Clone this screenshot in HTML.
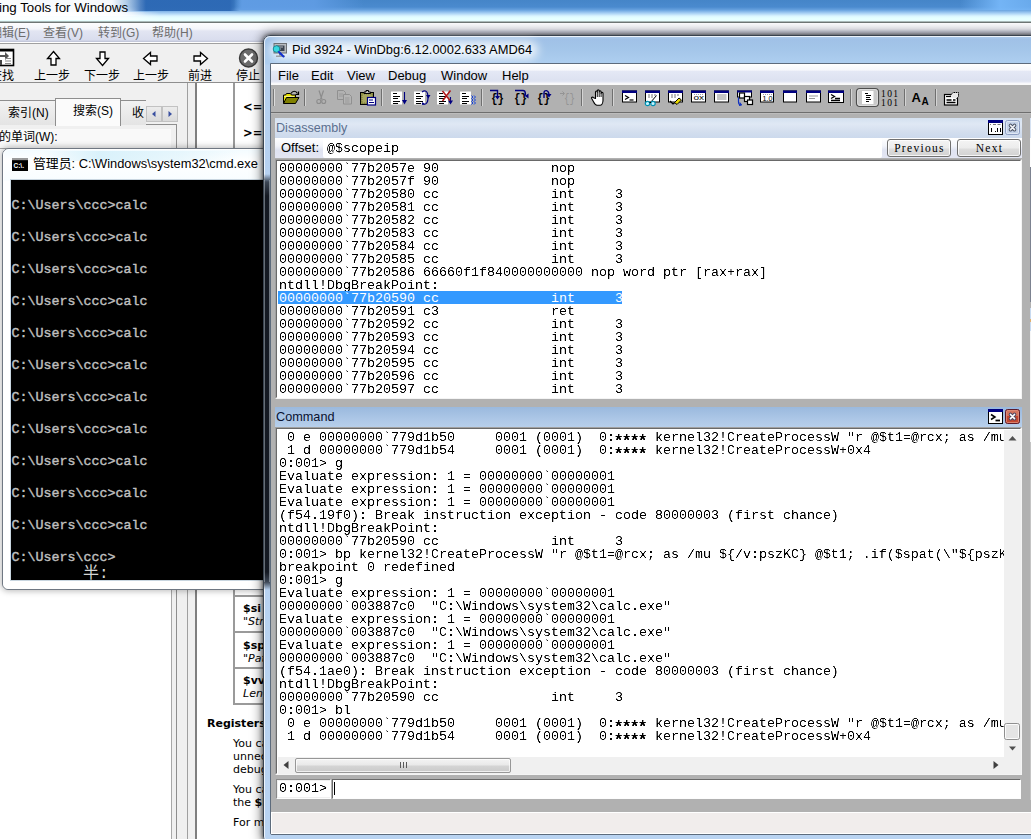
<!DOCTYPE html><html><head><meta charset="utf-8"><title>WinDbg</title><style>
*{box-sizing:border-box;margin:0;padding:0}
html,body{width:1031px;height:839px;overflow:hidden;background:#fff}
body{position:relative;font-family:"Liberation Sans","Noto Sans CJK SC",sans-serif;font-size:12px;color:#000}
.a{position:absolute}
.ui{font-family:"Liberation Sans","Noto Sans CJK SC",sans-serif;font-size:12px;white-space:pre}
.cj{font-family:"Liberation Sans","Noto Sans CJK SC",sans-serif;font-size:12px;white-space:pre}
.mono{font-family:"Liberation Mono","DejaVu Sans Mono",monospace;font-size:13.33px;line-height:13px;white-space:pre;color:#000;letter-spacing:0}
.ln{position:absolute;left:0;height:13px;line-height:15px;white-space:pre}
.cmdt{font-family:"Liberation Mono","DejaVu Sans Mono",monospace;font-weight:normal;-webkit-text-stroke:.400px #c0c0c0;font-size:13.33px;line-height:20px;height:16px;white-space:pre;color:#c0c0c0}
.ast{display:inline-block;width:32px;height:13px;vertical-align:top;font-weight:bold;font-size:17px;letter-spacing:-2.200px;line-height:23px;overflow:hidden;text-indent:-1.500px}
.sep{position:absolute;top:89px;width:2px;height:20px;border-left:1px solid #808080;border-right:1px solid #d8d8d8}
</style></head><body>
<div class="a" style="left:0;top:0;width:1031px;height:23px;background:linear-gradient(180deg,#4585c8 0px,#4a8ace 7px,#68a2df 10px,#a4cdf3 13px,#dbf5ff 16px,#e6ffff 18px,#e9ffff 21px,#6e7674 22px,#6e7674 23px)"></div>
<div class="a" style="left:126px;top:0;width:114px;height:11px;background:linear-gradient(90deg,rgba(44,104,180,0),rgba(44,104,180,.95) 14px,rgba(44,104,180,.95) 104px,rgba(44,104,180,0));"></div>
<div class="a" style="left:234px;top:0;width:130px;height:10px;background:linear-gradient(90deg,rgba(98,158,230,0),rgba(98,158,230,.9) 8px,rgba(98,158,230,.85) 80px,rgba(98,158,230,.0));"></div>
<div class="a" style="left:960px;top:0;width:71px;height:10px;background:linear-gradient(90deg,rgba(120,185,250,0),rgba(120,185,250,.9) 40px,rgba(120,185,250,.7));"></div>
<div class="a" style="left:0;top:0;width:150px;height:16px;background:linear-gradient(90deg,rgba(255,255,255,.97) 0,rgba(255,255,255,.95) 112px,rgba(255,255,255,.6) 126px,rgba(255,255,255,0) 146px)"></div>
<div class="a" style="left:0;top:12px;width:160px;height:8px;background:linear-gradient(90deg,rgba(255,255,255,.9) 0,rgba(255,255,255,.8) 120px,rgba(255,255,255,0) 160px)"></div>
<div class="a ui" style="left:-1px;top:0px;font-size:13.300px;line-height:16px;color:#000;">ing Tools for Windows</div>
<div class="a" style="left:0;top:23px;width:1031px;height:21px;background:linear-gradient(180deg,#fdfdfe 0,#f4f5fa 6px,#e2e5f2 8px,#d9ddee 17px,#c4c8da 18.500px,#ffffff 19px,#ffffff 20px,#a0a0a0 20px)"></div>
<div class="a cj" style="left:-10px;top:24px;line-height:18px;color:#6d6d6d">编辑(E)</div>
<div class="a cj" style="left:43px;top:24px;line-height:18px;color:#6d6d6d">查看(V)</div>
<div class="a cj" style="left:98px;top:24px;line-height:18px;color:#6d6d6d">转到(G)</div>
<div class="a cj" style="left:152px;top:24px;line-height:18px;color:#6d6d6d">帮助(H)</div>
<div class="a" style="left:0;top:44px;width:1031px;height:38px;background:#f0f0f0"></div>
<div class="a" style="left:0;top:82px;width:1031px;height:1px;background:#8e8e8e"></div>
<div class="a cj" style="left:-10px;top:68px;line-height:16px;color:#000">查找</div>
<div class="a cj" style="left:34px;top:68px;line-height:16px;color:#000">上一步</div>
<div class="a cj" style="left:84px;top:68px;line-height:16px;color:#000">下一步</div>
<div class="a cj" style="left:133px;top:68px;line-height:16px;color:#000">上一步</div>
<div class="a cj" style="left:188px;top:68px;line-height:16px;color:#000">前进</div>
<div class="a cj" style="left:236px;top:68px;line-height:16px;color:#000">停止</div>
<svg class="a" style="left:0;top:46px" width="270" height="24" viewBox="0 0 270 24"><rect x="-3" y="3.5" width="16.5" height="16" fill="#fff" stroke="#000" stroke-width="1.6"/><rect x="-3" y="3" width="17" height="2.5" fill="#000"/><path d="M0 9h5v-3l4 4-4 4v-3h-5z" fill="#555"/><path d="M5 15h6M5 17.500h6M5 12.500h6" stroke="#888" stroke-width="1"/><rect x="-2" y="14" width="4" height="5" fill="#444"/><path d="M53.500 5.500l6 7h-3.500v6.500h-5v-6.500h-3.500z" fill="#fff" stroke="#000" stroke-width="1.300"/><path d="M102.500 19.500l6-7h-3.500v-6.500h-5v6.500h-3.500z" fill="#fff" stroke="#000" stroke-width="1.300"/><path d="M143.500 12.500l7-6v3.500h6.500v5h-6.500v3.500z" fill="#fff" stroke="#000" stroke-width="1.300"/><path d="M207.500 12.500l-7-6v3.500h-6.500v5h6.500v3.500z" fill="#fff" stroke="#000" stroke-width="1.300"/><circle cx="248.500" cy="12" r="9" fill="#6b6b6b" stroke="#3a3a3a" stroke-width="1.400"/><path d="M245 8.500l7 7M252 8.500l-7 7" stroke="#fff" stroke-width="2.600" stroke-linecap="round"/></svg>
<div class="a" style="left:0;top:83px;width:197px;height:756px;background:#f0f0f0"></div>
<div class="a" style="left:-2px;top:124px;width:179px;height:720px;border:1px solid #8e8e8e;background:#f0f0f0"></div>
<div class="a" style="left:0;top:129px;width:171px;height:20px;background:#f9f9f9"></div>
<div class="a" style="left:-2px;top:100px;width:58px;height:25px;border:1px solid #8e8e8e;border-bottom:none;background:linear-gradient(#f2f2f2,#e4e4e4)"></div>
<div class="a" style="left:120px;top:100px;width:26px;height:25px;border:1px solid #8e8e8e;border-bottom:none;border-left:none;border-right:none;background:linear-gradient(#f2f2f2,#e4e4e4)"></div>
<div class="a" style="left:55px;top:98px;width:66px;height:28px;border:1px solid #8e8e8e;border-bottom:none;background:#fbfbfb"></div>
<div class="a cj" style="left:8px;top:104px;line-height:18px">索引(N)</div>
<div class="a cj" style="left:73px;top:102px;line-height:19px">搜索(S)</div>
<div class="a cj" style="left:132px;top:104px;line-height:18px">收</div>
<div class="a" style="left:146px;top:106px;width:16px;height:16px;border:1px solid #c2c2c2;background:linear-gradient(#ececec,#dadada)"></div>
<div class="a" style="left:162px;top:106px;width:16px;height:16px;border:1px solid #c2c2c2;background:linear-gradient(#ececec,#dadada)"></div>
<svg class="a" style="left:146px;top:106px" width="32" height="16"><path d="M9.500 5v6l-3.500-3z" fill="#3a50a0"/><path d="M22.500 5v6l3.500-3z" fill="#3a50a0"/></svg>
<div class="a cj" style="left:-1px;top:128px;line-height:18px">的单词(W):</div>
<div class="a" style="left:-2px;top:148px;width:174px;height:700px;border:1px solid #a8a8a8;background:#fff"></div>
<div class="a" style="left:187px;top:83px;width:1px;height:756px;background:#a0a0a0"></div>
<div class="a" style="left:195px;top:83px;width:2px;height:756px;background:#7f7f7f"></div>
<div class="a" style="left:197px;top:83px;width:80px;height:756px;background:#fff"></div>
<div class="a" style="left:233px;top:83px;width:2px;height:66px;background:#9a9a9a"></div>
<div class="a" style="left:243px;top:101px;font-family:'DejaVu Sans','Liberation Sans',sans-serif;font-size:11px;white-space:pre;line-height:13px;font-weight:bold;font-size:11.500px">&lt;=</div>
<div class="a" style="left:243px;top:127px;font-family:'DejaVu Sans','Liberation Sans',sans-serif;font-size:11px;white-space:pre;line-height:13px;font-weight:bold;font-size:11.500px">&gt;=</div>
<div class="a" style="left:233px;top:588px;width:2px;height:117px;background:#9a9a9a"></div>
<div class="a" style="left:233px;top:595px;width:40px;height:2px;background:#9a9a9a"></div>
<div class="a" style="left:233px;top:631px;width:40px;height:2px;background:#9a9a9a"></div>
<div class="a" style="left:233px;top:667px;width:40px;height:2px;background:#9a9a9a"></div>
<div class="a" style="left:233px;top:703px;width:40px;height:2px;background:#9a9a9a"></div>
<div class="a" style="left:243px;top:602px;font-family:'DejaVu Sans','Liberation Sans',sans-serif;font-size:11px;white-space:pre;line-height:13px;font-weight:bold">$si</div>
<div class="a" style="left:243px;top:615px;font-family:'DejaVu Sans','Liberation Sans',sans-serif;font-size:11px;white-space:pre;line-height:13px;">"<i>Str</i></div>
<div class="a" style="left:243px;top:639px;font-family:'DejaVu Sans','Liberation Sans',sans-serif;font-size:11px;white-space:pre;line-height:13px;font-weight:bold">$sp</div>
<div class="a" style="left:243px;top:652px;font-family:'DejaVu Sans','Liberation Sans',sans-serif;font-size:11px;white-space:pre;line-height:13px;">"<i>Pat</i></div>
<div class="a" style="left:243px;top:674px;font-family:'DejaVu Sans','Liberation Sans',sans-serif;font-size:11px;white-space:pre;line-height:13px;font-weight:bold">$vv</div>
<div class="a" style="left:243px;top:687px;font-family:'DejaVu Sans','Liberation Sans',sans-serif;font-size:11px;white-space:pre;line-height:13px;"><i>Leng</i></div>
<div class="a" style="left:207px;top:717px;font-family:'DejaVu Sans','Liberation Sans',sans-serif;font-size:11px;white-space:pre;line-height:13px;font-weight:bold">Registers</div>
<div class="a" style="left:233px;top:737px;font-family:'DejaVu Sans','Liberation Sans',sans-serif;font-size:11px;white-space:pre;line-height:13px;">You ca</div>
<div class="a" style="left:233px;top:750px;font-family:'DejaVu Sans','Liberation Sans',sans-serif;font-size:11px;white-space:pre;line-height:13px;">unnec</div>
<div class="a" style="left:233px;top:763px;font-family:'DejaVu Sans','Liberation Sans',sans-serif;font-size:11px;white-space:pre;line-height:13px;">debug</div>
<div class="a" style="left:233px;top:783px;font-family:'DejaVu Sans','Liberation Sans',sans-serif;font-size:11px;white-space:pre;line-height:13px;">You ca</div>
<div class="a" style="left:233px;top:796px;font-family:'DejaVu Sans','Liberation Sans',sans-serif;font-size:11px;white-space:pre;line-height:13px;">the <b>$i</b></div>
<div class="a" style="left:233px;top:816px;font-family:'DejaVu Sans','Liberation Sans',sans-serif;font-size:11px;white-space:pre;line-height:13px;">For mo</div>
<div class="a" style="left:2px;top:148px;width:267px;height:442px;border-radius:7px 7px 6px 6px;background:linear-gradient(180deg,#f2fbff 0,#ffffff 12px,#f8fdff 31px,#ffffff 32px);border:1px solid #6f7782;box-shadow:0 0 6px 1px rgba(0,0,0,.28)"></div>
<div class="a" style="left:3px;top:149px;width:265px;height:440px;border-radius:6px;border:1px solid rgba(255,255,255,.9)"></div>
<div class="a" style="left:40px;top:151px;width:200px;height:10px;background:linear-gradient(90deg,rgba(214,240,250,0),rgba(214,240,250,.9) 30%,rgba(214,240,250,.5) 70%,rgba(214,240,250,0))"></div>
<div class="a" style="left:10px;top:179px;width:256px;height:402px;border:1px solid #c9d6e0;background:#000"></div>
<div class="a" style="left:11px;top:180px;width:254px;height:400px;background:#000;overflow:hidden">
<div class="a cmdt" style="left:.500px;top:16px">C:\Users\ccc&gt;calc</div>
<div class="a cmdt" style="left:.500px;top:48px">C:\Users\ccc&gt;calc</div>
<div class="a cmdt" style="left:.500px;top:80px">C:\Users\ccc&gt;calc</div>
<div class="a cmdt" style="left:.500px;top:112px">C:\Users\ccc&gt;calc</div>
<div class="a cmdt" style="left:.500px;top:144px">C:\Users\ccc&gt;calc</div>
<div class="a cmdt" style="left:.500px;top:176px">C:\Users\ccc&gt;calc</div>
<div class="a cmdt" style="left:.500px;top:208px">C:\Users\ccc&gt;calc</div>
<div class="a cmdt" style="left:.500px;top:240px">C:\Users\ccc&gt;calc</div>
<div class="a cmdt" style="left:.500px;top:272px">C:\Users\ccc&gt;calc</div>
<div class="a cmdt" style="left:.500px;top:304px">C:\Users\ccc&gt;calc</div>
<div class="a cmdt" style="left:.500px;top:336px">C:\Users\ccc&gt;calc</div>
<div class="a cmdt" style="left:.500px;top:368px">C:\Users\ccc&gt;</div>
<div class="a" style="left:72px;top:386px;font-family:'Liberation Mono','Noto Sans CJK SC',monospace;font-size:16px;line-height:17px;font-weight:400;color:#d4d4d4;white-space:pre">半:</div>
</div>
<svg class="a" style="left:12px;top:158px" width="16" height="13" viewBox="0 0 16 12" preserveAspectRatio="none"><rect x="0" y="0" width="16" height="12" fill="#000"/><rect x="0" y="0" width="16" height="2" fill="#9a9a9a"/><text x="1.500" y="9.500" font-family="Liberation Sans,sans-serif" font-size="6.500" font-weight="bold" fill="#fff">C:\.</text></svg>
<div class="a ui" id="cmdtitle" style="left:33px;top:155px;font-size:12.850px;line-height:18px;">管理员: C:\Windows\system32\cmd.exe</div>
<div class="a" style="left:263px;top:35px;width:800px;height:808px;border-radius:7px 0 0 7px;border:1px solid #39434f;background:linear-gradient(180deg,#b4cfee 0,#a0c1e7 3px,#a3c5e9 12px,#aacbed 22px,#aecef0 28px,#b6d1f0 29px,#b9d3f1 100%);box-shadow:0 0 12px 1px rgba(0,0,0,.6),0 0 4px 0 rgba(0,0,0,.6)"></div>
<div class="a" style="left:264px;top:36px;width:800px;height:806px;border-radius:6px 0 0 6px;border-left:1px solid rgba(255,255,255,.75);border-top:1px solid rgba(255,255,255,.75)"></div>
<div class="a" style="left:264px;top:174px;width:6px;height:416px;background:linear-gradient(180deg,rgba(16,20,28,0) 0,rgba(30,36,46,.8) 8px,rgba(14,18,26,.96) 22px,rgba(14,18,26,.96) 398px,rgba(30,36,46,.8) 408px,rgba(16,20,28,0) 416px)"></div>
<div class="a" style="left:264px;top:180px;width:1px;height:402px;background:rgba(170,180,190,.55)"></div>
<div class="a" style="left:269px;top:180px;width:1px;height:402px;background:rgba(170,180,190,.6)"></div>
<div class="a" style="left:270px;top:41px;width:268px;height:18px;border-radius:9px;background:rgba(255,255,255,.8);filter:blur(5px)"></div>
<svg class="a" style="left:272px;top:42px" width="17" height="17" viewBox="0 0 17 17"><rect x="2" y="1.500" width="12.500" height="9.500" fill="#b8bcc0" stroke="#6c7074" stroke-width="1"/><rect x="4" y="3.500" width="8.500" height="5.500" fill="#3c4450"/><path d="M5 5h6M5 7h4" stroke="#cfd4da" stroke-width=".8"/><path d="M4 13.500h9v1.500h-9z" fill="#9a9ea2"/><rect x="7" y="11" width="3" height="2.500" fill="#808488"/><circle cx="4.500" cy="7" r="3.300" fill="#38d8e0" stroke="#1a8a96" stroke-width="1"/><path d="M7 10l4.500 4.500" stroke="#1030d0" stroke-width="2" stroke-linecap="round"/></svg>
<div class="a ui" id="wtitle" style="left:292px;top:41px;font-size:12.900px;line-height:18px;">Pid 3924 - WinDbg:6.12.0002.633 AMD64</div>
<div class="a" style="left:270px;top:63px;width:800px;height:772px;border-radius:0 0 0 2px;border:1px solid #5d6b7c;background:#b1b1b1"></div>
<div class="a" style="left:271px;top:64px;width:760px;height:20px;background:linear-gradient(180deg,#ffffff 0,#f7f8fc 6px,#e4e8f5 7.500px,#dde2f1 16px,#e4e7f4 18px,#f6f7fb 19px,#fbfbfd 20px)"></div>
<div class="a ui mi" style="left:278px;top:66px;font-size:13px;line-height:19px;">File</div>
<div class="a ui mi" style="left:311px;top:66px;font-size:13px;line-height:19px;">Edit</div>
<div class="a ui mi" style="left:347px;top:66px;font-size:13px;line-height:19px;">View</div>
<div class="a ui mi" style="left:388px;top:66px;font-size:13px;line-height:19px;">Debug</div>
<div class="a ui mi" style="left:441px;top:66px;font-size:13px;line-height:19px;">Window</div>
<div class="a ui mi" style="left:502px;top:66px;font-size:13px;line-height:19px;">Help</div>
<div class="a" style="left:271px;top:84px;width:760px;height:1px;background:#fafafa"></div>
<div class="a" style="left:271px;top:85px;width:760px;height:27px;background:#b1b1b1"></div>
<div class="a" style="left:271px;top:112px;width:760px;height:1px;background:#6e6e6e"></div>
<div class="a" style="left:271px;top:113px;width:760px;height:1px;background:#bcbcbc"></div>
<svg class="a" style="left:0;top:0" width="1031" height="120" viewBox="0 0 1031 120"><path d="M273.500 89v17" stroke="#7a7a7a"/><path d="M274.500 89v17" stroke="#dcdcdc"/><path d="M304.500 89v17" stroke="#6f6f6f"/><path d="M305.500 89v17" stroke="#d4d4d4"/><path d="M381.500 89v17" stroke="#6f6f6f"/><path d="M382.500 89v17" stroke="#d4d4d4"/><path d="M481.500 89v17" stroke="#6f6f6f"/><path d="M482.500 89v17" stroke="#d4d4d4"/><path d="M581.500 89v17" stroke="#6f6f6f"/><path d="M582.500 89v17" stroke="#d4d4d4"/><path d="M612.500 89v17" stroke="#6f6f6f"/><path d="M613.500 89v17" stroke="#d4d4d4"/><path d="M850.500 89v17" stroke="#6f6f6f"/><path d="M851.500 89v17" stroke="#d4d4d4"/><path d="M904.500 89v17" stroke="#6f6f6f"/><path d="M905.500 89v17" stroke="#d4d4d4"/><path d="M935.500 89v17" stroke="#6f6f6f"/><path d="M936.500 89v17" stroke="#d4d4d4"/><g transform="translate(283,90)"><path d="M8 3.500c1.500-3 5-3 6.500 0" fill="none" stroke="#000" stroke-width="1.200"/><path d="M15.500 1.500v3h-3" fill="none" stroke="#000" stroke-width="1.200"/><path d="M.500 13.500v-8.500h2l1-1.500h4l1 1.500h4v3" fill="#e8e000" stroke="#000" stroke-width="1"/><path d="M.500 13.500l3-6h12.500l-3.500 6z" fill="#808000" stroke="#000" stroke-width="1"/><path d="M1.500 6.500h9" stroke="#fff" stroke-width="1" stroke-dasharray="1 1"/></g><g transform="translate(316,90)"><path d="M3 .500l3 9M7.500 .500l-3 9" stroke="#8c8c8c" stroke-width="1.200" fill="none"/><circle cx="2.800" cy="11.500" r="2" fill="none" stroke="#8c8c8c" stroke-width="1.100"/><circle cx="7.700" cy="11.500" r="2" fill="none" stroke="#8c8c8c" stroke-width="1.100"/></g><g transform="translate(337,90)"><path d="M.500 .500h6l2 2v7h-8z" fill="none" stroke="#909090" stroke-width="1"/><path d="M2 4h4M2 6h4" stroke="#9a9a9a" stroke-width="1"/><path d="M6.500 4.500h6l2 2v7.500h-8z" fill="#b4b4b4" stroke="#909090" stroke-width="1"/><path d="M8 8h4.500M8 10h4.500M8 12h4.500" stroke="#9a9a9a" stroke-width="1"/></g><g transform="translate(360,90)"><rect x=".500" y="2.500" width="13" height="12" fill="#909048" stroke="#000" stroke-width="1"/><path d="M2 4h10v9h-10z" fill="#a8a860" stroke="#606020" stroke-width=".600" stroke-dasharray="1 1"/><path d="M4 3.500v-1.500h2v-1.500h2.500v1.500h2v1.500z" fill="#c8c8c8" stroke="#000" stroke-width="1"/><rect x="7.500" y="7.500" width="8" height="7.500" fill="#fff" stroke="#000080" stroke-width="1.200"/><path d="M9 10h4M9 12.500h5" stroke="#000080" stroke-width="1"/></g><g transform="translate(391,90)"><rect x="0" y="1.500" width="11" height="13" fill="#fff"/><path d="M2 3.500h4M2 6.500h7M2 8.500h5M2 11.500h7M2 13.500h5" stroke="#000" stroke-width="1" shape-rendering="crispEdges"/><path d="M13.500 2v10" stroke="#000080" stroke-width="1.100"/><path d="M11 10l2.500 4.500l2.500-4.500z" fill="#000080"/></g><g transform="translate(414,90)"><rect x="0" y="1.500" width="11" height="13" fill="#fff"/><path d="M2 3.500h4M2 6.500h7M2 8.500h5M2 11.500h7M2 13.500h5" stroke="#000" stroke-width="1" shape-rendering="crispEdges"/><path d="M8 2c3-2.500 6-1 6 5.500s-3 8-6 5.500" fill="none" stroke="#000080" stroke-width="1.200"/><path d="M12 5h4.500l-2.200 3.500z" fill="#000080"/><path d="M8.500 12l-.500 3l3-.500z" fill="#000080"/></g><g transform="translate(437,90)"><rect x="0" y="1.500" width="11" height="13" fill="#fff"/><path d="M2 3.500h4M2 6.500h7M2 8.500h5M2 11.500h7M2 13.500h5" stroke="#000" stroke-width="1" shape-rendering="crispEdges"/><path d="M13.500 7v5" stroke="#000080" stroke-width="1.100"/><path d="M11 10.500l2.500 4l2.500-4z" fill="#000080"/><path d="M5.500 1l7.500 9.500M13.500 .500l-8 10.500" stroke="#b01818" stroke-width="1.500"/></g><g transform="translate(460,90)"><rect x="0" y="1.500" width="11" height="13" fill="#fff"/><path d="M2 3.500h4M2 6.500h7M2 8.500h5M2 11.500h7M2 13.500h5" stroke="#000" stroke-width="1" shape-rendering="crispEdges"/><path d="M11.500 5.500l1.500 1.500l-1.500 1.500M11.500 8.500l1.500 1.500l-1.500 1.500M11.500 11.500l1.500 1.500l-1.500 1.500M14 5.500l1.500 1.500l-1.500 1.500M14 8.500l1.500 1.500l-1.500 1.500M14 11.500l1.500 1.500l-1.500 1.500" fill="none" stroke="#1040e0" stroke-width="1"/></g><g transform="translate(490,89)"><text x="1" y="13" font-family="Liberation Mono,monospace" font-weight="bold" font-size="13.500" fill="#000" textLength="13" lengthAdjust="spacingAndGlyphs">{}</text><path d="M0 1.500h7.500v7" fill="none" stroke="#000080" stroke-width="1.400"/><path d="M5 7l2.500 3.500l2.500-3.500z" fill="#000080"/></g><g transform="translate(513,89)"><text x="1" y="13" font-family="Liberation Mono,monospace" font-weight="bold" font-size="13.500" fill="#000" textLength="13" lengthAdjust="spacingAndGlyphs">{}</text><path d="M2 1.500h8c3 0 3 5.500 1 5.500" fill="none" stroke="#000080" stroke-width="1.400"/><path d="M12.500 4.500v5l-3.500-2.500z" fill="#000080" transform="translate(3,0)"/></g><g transform="translate(536,89)"><text x="1" y="13" font-family="Liberation Mono,monospace" font-weight="bold" font-size="13.500" fill="#000" textLength="13" lengthAdjust="spacingAndGlyphs">{}</text><path d="M8 9v-5c0-3.500 5-3.500 5 2.500" fill="none" stroke="#000080" stroke-width="1.400"/><path d="M12 5h5l-2.500 3.500z" fill="#000080" transform="translate(-1.500,0)"/></g><g transform="translate(560,89)"><text x="4" y="12.500" font-family="Liberation Mono,monospace" font-size="12.500" fill="#949494" textLength="11" lengthAdjust="spacingAndGlyphs">{}</text><path d="M0 4.500h4M2.500 2.500l2 2l-2 2" fill="none" stroke="#949494" stroke-width="1"/></g><g transform="translate(591,89)"><path d="M4.500 9.500v-6.500c0-1.300 1.800-1.300 1.800 0v-1.200c0-1.300 1.900-1.300 1.900 0v1c0-1.300 1.900-1.300 1.900 0v1.500c0-1.300 1.900-1.300 1.900 0v7c0 3-1.500 5-3 5h-3c-1.500 0-2.500-1.500-3.500-3.500l-1.800-3.200c-.700-1.300 .900-2 1.800-.900z" fill="#fff" stroke="#000" stroke-width="1.100" stroke-linejoin="round"/><path d="M6.300 3v5M8.200 2.800v5.200M10.100 3.800v4.200" stroke="#000" stroke-width=".9"/></g><g transform="translate(622,90.5)"><rect x=".500" y=".500" width="14" height="11" fill="#fff" stroke="#000" stroke-width="1"/><rect x="0" y="0" width="15" height="2.500" fill="#000080"/><path d="M3 5l3.500 2l-3.500 2" fill="none" stroke="#000" stroke-width="1.200"/><path d="M7.500 9.500h4" stroke="#000" stroke-width="1.200"/></g><g transform="translate(645,90.5)"><rect x=".500" y=".500" width="14" height="11" fill="#fff" stroke="#000" stroke-width="1"/><rect x="0" y="0" width="15" height="2.500" fill="#000080"/><path d="M3 4.500h9M3 6.500h6" stroke="#777" stroke-width="1" stroke-dasharray="2 1"/><path d="M11.500 5l-6 7" stroke="#000" stroke-width="1"/><circle cx="2.500" cy="13" r="2.200" fill="#c8f4ff" stroke="#0090b0" stroke-width="1.200"/><circle cx="8" cy="13" r="2.200" fill="#c8f4ff" stroke="#0090b0" stroke-width="1.200"/><path d="M4.500 12h1.500" stroke="#000" stroke-width="1"/></g><g transform="translate(668,90.5)"><rect x=".500" y=".500" width="14" height="11" fill="#fff" stroke="#000" stroke-width="1"/><rect x="0" y="0" width="15" height="2.500" fill="#000080"/><path d="M3 4.500h9M3 6.500h6" stroke="#777" stroke-width="1" stroke-dasharray="2 1"/><path d="M2 10.500l3 3l2-1.500" fill="none" stroke="#000" stroke-width="1.200"/><path d="M6.500 12l4.500-4.500l2.500 2l-4.500 4.500z" fill="#e8d800" stroke="#000" stroke-width="1"/></g><g transform="translate(691,90.5)"><rect x=".500" y=".500" width="14" height="11" fill="#fff" stroke="#000" stroke-width="1"/><rect x="0" y="0" width="15" height="2.500" fill="#000080"/><text x="2.500" y="9.500" font-family="Liberation Sans,sans-serif" font-size="8" fill="#000" textLength="10.500" lengthAdjust="spacingAndGlyphs">ox</text><path d="M3 4h10" stroke="#888" stroke-width=".8" stroke-dasharray="1 1"/></g><g transform="translate(714,90.5)"><rect x=".500" y=".500" width="14" height="11" fill="#fff" stroke="#000" stroke-width="1"/><rect x="0" y="0" width="15" height="2.500" fill="#000080"/><path d="M3 4.500h9.500M3 6.500h9.500M3 8.500h9.500" stroke="#8a8a8a" stroke-width="1"/></g><g transform="translate(737,89.5)"><rect x=".500" y="1.500" width="14" height="6" fill="#fff" stroke="#000"/><rect x="0" y="1" width="15" height="2" fill="#000080"/><rect x="2.500" y="3.500" width="5" height="5" fill="#fff" stroke="#000" stroke-width="1.200"/><rect x="7.500" y="7" width="5" height="5" fill="#fff" stroke="#000" stroke-width="1.200"/><rect x="10.500" y="10.500" width="5" height="4.500" fill="#fff" stroke="#000" stroke-width="1.200"/><path d="M1.500 8v4.500c0 2 1 3 3 3" fill="none" stroke="#1030c0" stroke-width="1.200"/><path d="M3 13l1.500 2.500l-2.500 .500" fill="none" stroke="#1030c0" stroke-width="1"/></g><g transform="translate(760,90.5)"><rect x=".500" y=".500" width="13" height="11" fill="#fff" stroke="#000" stroke-width="1"/><rect x="0" y="0" width="14" height="2.500" fill="#000080"/><text x="2.500" y="10" font-family="Liberation Sans,sans-serif" font-size="7.500" fill="#000" textLength="10" lengthAdjust="spacingAndGlyphs">1.0</text><path d="M3 4h9" stroke="#888" stroke-width=".8" stroke-dasharray="1 1"/></g><g transform="translate(783,90.5)"><rect x=".500" y=".500" width="13" height="11" fill="#fff" stroke="#000" stroke-width="1"/><rect x="0" y="0" width="14" height="2.500" fill="#000080"/></g><g transform="translate(806,90.5)"><rect x=".500" y=".500" width="14" height="11" fill="#fff" stroke="#000" stroke-width="1"/><rect x="0" y="0" width="15" height="2.500" fill="#000080"/><path d="M3 5.500h9M3 8h6" stroke="#999" stroke-width="1"/></g><g transform="translate(828,90.5)"><rect x=".500" y=".500" width="15" height="11.500" fill="#fff" stroke="#000" stroke-width="1"/><rect x="0" y="0" width="16" height="2.500" fill="#000080"/><path d="M3 4l3.500 2l-3.500 2" fill="none" stroke="#000" stroke-width="1.300"/><path d="M3 10h9M7 8h5" stroke="#000" stroke-width="1.300"/></g><rect x="856.500" y="88.500" width="22" height="18" rx="3.500" fill="#c9c9c9" stroke="#4e4e4e" stroke-width="1.200"/><rect x="857.500" y="89.500" width="20" height="16" rx="2.500" fill="none" stroke="#e6e6e6" stroke-width="1" opacity=".7"/><g transform="translate(862,91)"><rect x="0" y="0" width="11.500" height="13" fill="#fff"/><path d="M3 2.500h3M4 4.500h5M4 6.500h4M4 8.500h5M4 10.500h3" stroke="#000" stroke-width="1" shape-rendering="crispEdges"/></g><text x="881" y="96.500" font-family="Liberation Serif,serif" font-size="9.500" fill="#000" textLength="17" lengthAdjust="spacing">101</text><text x="881" y="105.500" font-family="Liberation Serif,serif" font-size="9.500" fill="#000" textLength="17" lengthAdjust="spacing">101</text><text x="911.500" y="101.500" font-family="Liberation Sans,sans-serif" font-weight="bold" font-size="13" fill="#000">A</text><text x="921.500" y="105" font-family="Liberation Sans,sans-serif" font-weight="bold" font-size="10" fill="#000">A</text><g transform="translate(944,91)"><rect x=".500" y="3.500" width="13" height="10.500" fill="#fff" stroke="#000" stroke-width="1.200"/><path d="M2.500 9h5M2.500 11.500h9M9 9h2.500" stroke="#000" stroke-width="1.300"/><path d="M5 6l4-4.500h5.500v4l-2 2" fill="#e8e8e8" stroke="#000" stroke-width="1" stroke-dasharray="1.500 .7"/><path d="M2 5.500h5" stroke="#000" stroke-width="1.200"/></g></svg>
<div class="a" style="left:275px;top:118px;width:747px;height:20px;background:linear-gradient(180deg,#d4e1f0 0,#dfe8f4 6px,#d3deee 14px,#ccd9ec 20px)"></div>
<div class="a ui" id="dis" style="left:276px;top:119px;font-size:12.600px;line-height:18px;color:#5b6f8f">Disassembly</div>
<svg class="a" style="left:987px;top:120px" width="34" height="16" viewBox="0 0 34 16"><rect x="1.500" y=".500" width="14" height="14" fill="#fff" stroke="#000" stroke-width="1"/><rect x="1" y="0" width="15" height="3" fill="#000080"/><path d="M3 4.500h1M6 4.500h3M10.500 4.500h3" stroke="#777" stroke-width="1"/><path d="M4.500 8v4M10.500 8v4M13.500 8v4M8.500 11v1" stroke="#000" stroke-width="1" shape-rendering="crispEdges"/><rect x="18.500" y=".500" width="14" height="14" rx="2" fill="#c4d2e8" stroke="#8b9cc0" stroke-width="1"/><rect x="19.500" y="1.500" width="12" height="12" rx="1.200" fill="none" stroke="#dfe8f4" stroke-width="1"/><path d="M23.500 5.500l4 4.200M27.500 5.500l-4 4.200" stroke="#4a5264" stroke-width="3.600" stroke-linecap="round"/><path d="M23.500 5.500l4 4.200M27.500 5.500l-4 4.200" stroke="#f2f4f8" stroke-width="1.700" stroke-linecap="round"/></svg>
<div class="a" style="left:275px;top:138px;width:747px;height:20px;background:linear-gradient(180deg,#ffffff 0,#f2f4fa 8px,#dfe3f1 12px,#e3e6f3 20px)"></div>
<div class="a ui" id="off" style="left:281px;top:139px;font-size:13px;line-height:18px">Offset:</div>
<div class="a" style="left:323px;top:138px;width:559px;height:20px;background:#fff;border-radius:2px"></div>
<div class="a mono" style="left:327px;top:141px;height:15px;line-height:15px;width:90px;background:#fff;filter:contrast(2)">@$scopeip</div>
<div class="a" style="left:887px;top:139px;width:64px;height:18px;border:1px solid #707070;border-radius:3px;background:linear-gradient(180deg,#f4f4f4 0,#ececec 8px,#dddddd 9px,#d0d0d0 17px);box-shadow:inset 0 0 0 1px rgba(255,255,255,.8);font-family:'Liberation Serif',serif;font-size:11.500px;line-height:17px;text-align:center;letter-spacing:1.300px;padding-left:1px;white-space:pre">Previous</div>
<div class="a" style="left:957px;top:139px;width:64px;height:18px;border:1px solid #707070;border-radius:3px;background:linear-gradient(180deg,#f4f4f4 0,#ececec 8px,#dddddd 9px,#d0d0d0 17px);box-shadow:inset 0 0 0 1px rgba(255,255,255,.8);font-family:'Liberation Serif',serif;font-size:11.500px;line-height:17px;text-align:center;letter-spacing:1.300px;padding-left:1px;white-space:pre">Next</div>
<div class="a" style="left:275px;top:159px;width:747px;height:240px;border:1px solid;border-color:#a0a0a0 #f4f4f4 #f4f4f4 #a0a0a0;background:#fff"></div>
<div class="a" style="left:276px;top:160px;width:745px;height:238px;border:1px solid;border-color:#696969 #fff #fff #696969;background:#fff"></div>
<div class="a mono" id="distext" style="left:279px;top:162px;width:740px;height:234px;overflow:hidden;background:#fff;filter:contrast(2)">
<div class="ln" style="top:-1px">00000000`77b2057e 90              nop</div>
<div class="ln" style="top:12px">00000000`77b2057f 90              nop</div>
<div class="ln" style="top:25px">00000000`77b20580 cc              int     3</div>
<div class="ln" style="top:38px">00000000`77b20581 cc              int     3</div>
<div class="ln" style="top:51px">00000000`77b20582 cc              int     3</div>
<div class="ln" style="top:64px">00000000`77b20583 cc              int     3</div>
<div class="ln" style="top:77px">00000000`77b20584 cc              int     3</div>
<div class="ln" style="top:90px">00000000`77b20585 cc              int     3</div>
<div class="ln" style="top:103px">00000000`77b20586 66660f1f840000000000 nop word ptr [rax+rax]</div>
<div class="ln" style="top:116px">ntdll!DbgBreakPoint:</div>
<div class="ln" style="top:142px">00000000`77b20591 c3              ret</div>
<div class="ln" style="top:155px">00000000`77b20592 cc              int     3</div>
<div class="ln" style="top:168px">00000000`77b20593 cc              int     3</div>
<div class="ln" style="top:181px">00000000`77b20594 cc              int     3</div>
<div class="ln" style="top:194px">00000000`77b20595 cc              int     3</div>
<div class="ln" style="top:207px">00000000`77b20596 cc              int     3</div>
<div class="ln" style="top:220px">00000000`77b20597 cc              int     3</div>
</div>
<div class="a mono" style="left:278px;top:291px;width:344px;height:13px;line-height:15px;padding-left:1px;background:#3399ff;color:#fff">00000000`77b20590 cc              int     3</div>
<div class="a" style="left:275px;top:407px;width:747px;height:20px;background:linear-gradient(180deg,#9ab9de 0,#a3c0e2 6px,#afc9e8 14px,#b7cfeb 20px)"></div>
<div class="a ui" id="cmdh" style="left:276px;top:408px;font-size:12.700px;line-height:18px;color:#0a1230">Command</div>
<svg class="a" style="left:987px;top:409px" width="34" height="16" viewBox="0 0 34 16"><rect x="1.500" y=".500" width="14" height="14" fill="#fff" stroke="#000" stroke-width="1"/><rect x="1" y="0" width="15" height="3" fill="#000080"/><path d="M4 5.500l4 2.500l-4 2.500" fill="none" stroke="#000" stroke-width="1.500"/><path d="M8.500 11.500h4.500" stroke="#000" stroke-width="1.800"/><rect x="18.500" y=".500" width="14" height="14" rx="2" fill="#c4462e" stroke="#5c1a2a" stroke-width="1"/><rect x="19.500" y="1.500" width="12" height="5.500" rx="1" fill="#e09a86" opacity=".55"/><rect x="19.500" y="1.500" width="12" height="12" rx="1.200" fill="none" stroke="#e8a898" stroke-width="1" opacity=".6"/><path d="M23.500 5.500l4 4.200M27.500 5.500l-4 4.200" stroke="#4c4660" stroke-width="3.600" stroke-linecap="round"/><path d="M23.500 5.500l4 4.200M27.500 5.500l-4 4.200" stroke="#ffffff" stroke-width="1.700" stroke-linecap="round"/></svg>
<div class="a" style="left:275px;top:427px;width:747px;height:348px;border:1px solid;border-color:#a0a0a0 #f4f4f4 #f4f4f4 #a0a0a0;background:#fff"></div>
<div class="a" style="left:276px;top:428px;width:745px;height:346px;border:1px solid;border-color:#696969 #fff #fff #696969;background:#fff"></div>
<div class="a mono" id="cmdtext" style="left:279px;top:430px;width:725px;height:326px;overflow:hidden;background:#fff;filter:contrast(2)">
<div class="ln" style="top:0px"> 0 e 00000000`779d1b50     0001 (0001)  0:<span class="ast">****</span> kernel32!CreateProcessW "r @$t1=@rcx; as /mu ${/v:pszKC} @$t1"</div>
<div class="ln" style="top:13px"> 1 d 00000000`779d1b54     0001 (0001)  0:<span class="ast">****</span> kernel32!CreateProcessW+0x4</div>
<div class="ln" style="top:26px">0:001&gt; g</div>
<div class="ln" style="top:39px">Evaluate expression: 1 = 00000000`00000001</div>
<div class="ln" style="top:52px">Evaluate expression: 1 = 00000000`00000001</div>
<div class="ln" style="top:65px">Evaluate expression: 1 = 00000000`00000001</div>
<div class="ln" style="top:78px">(f54.19f0): Break instruction exception - code 80000003 (first chance)</div>
<div class="ln" style="top:91px">ntdll!DbgBreakPoint:</div>
<div class="ln" style="top:104px">00000000`77b20590 cc              int     3</div>
<div class="ln" style="top:117px">0:001&gt; bp kernel32!CreateProcessW "r @$t1=@rcx; as /mu ${/v:pszKC} @$t1; .if($spat(\"${pszKC}\",\"*calc*\"))</div>
<div class="ln" style="top:130px">breakpoint 0 redefined</div>
<div class="ln" style="top:143px">0:001&gt; g</div>
<div class="ln" style="top:156px">Evaluate expression: 1 = 00000000`00000001</div>
<div class="ln" style="top:169px">00000000`003887c0  "C:\Windows\system32\calc.exe"</div>
<div class="ln" style="top:182px">Evaluate expression: 1 = 00000000`00000001</div>
<div class="ln" style="top:195px">00000000`003887c0  "C:\Windows\system32\calc.exe"</div>
<div class="ln" style="top:208px">Evaluate expression: 1 = 00000000`00000001</div>
<div class="ln" style="top:221px">00000000`003887c0  "C:\Windows\system32\calc.exe"</div>
<div class="ln" style="top:234px">(f54.1ae0): Break instruction exception - code 80000003 (first chance)</div>
<div class="ln" style="top:247px">ntdll!DbgBreakPoint:</div>
<div class="ln" style="top:260px">00000000`77b20590 cc              int     3</div>
<div class="ln" style="top:273px">0:001&gt; bl</div>
<div class="ln" style="top:286px"> 0 e 00000000`779d1b50     0001 (0001)  0:<span class="ast">****</span> kernel32!CreateProcessW "r @$t1=@rcx; as /mu ${/v:pszKC} @$t1"</div>
<div class="ln" style="top:299px"> 1 d 00000000`779d1b54     0001 (0001)  0:<span class="ast">****</span> kernel32!CreateProcessW+0x4</div>
</div>
<div class="a" style="left:1004px;top:430px;width:17px;height:328px;background:#f0f0f0"></div>
<svg class="a" style="left:1004px;top:430px" width="17" height="328" viewBox="0 0 17 328"><path d="M4.500 10.500l4-4.500l4 4.500z" fill="#505050"/><path d="M5 316.500l3.500 4l3.500-4z" fill="#505050"/><rect x=".500" y="293.500" width="15" height="16" rx="2" fill="#e4e4e4" stroke="#8f8f8f"/><rect x="1.500" y="294.500" width="13" height="14" rx="1" fill="none" stroke="#fbfbfb"/></svg>
<div class="a" style="left:278px;top:757px;width:726px;height:17px;background:#f0f0f0"></div>
<div class="a" style="left:1004px;top:757px;width:17px;height:17px;background:#f0f0f0"></div>
<div class="a" style="left:295px;top:758px;width:216px;height:15px;border:1px solid #979797;border-radius:2px;background:linear-gradient(180deg,#f3f3f3 0,#e9e9e9 6px,#d4d4d4 7px,#c9c9c9 14px);box-shadow:inset 0 0 0 1px rgba(255,255,255,.7)"></div>
<svg class="a" style="left:278px;top:757px" width="726" height="17" viewBox="0 0 726 17"><path d="M10.500 4v8l-5-4z" fill="#404040"/><path d="M715.500 4v8l5-4z" fill="#404040"/><path d="M122.500 5v6M125.500 5v6M128.500 5v6" stroke="#5a5a5a" stroke-width="1"/></svg>
<div class="a" style="left:276px;top:779px;width:55px;height:20px;border:1px solid;border-color:#8a8a8a #fdfdfd #fdfdfd #8a8a8a;background:#f0f0f0"></div>
<div class="a mono" style="left:278px;top:781px;height:16px;line-height:16px;width:52px;padding-left:1px;background:#f0f0f0;filter:contrast(2)">0:001&gt;</div>
<div class="a" style="left:332px;top:779px;width:689px;height:20px;border:1px solid;border-color:#6a6a6a #fdfdfd #fdfdfd #6a6a6a;background:#fff"></div>
<div class="a" style="left:334px;top:782px;width:1px;height:13px;background:#000"></div>
<div class="a" style="left:1030px;top:118px;width:1px;height:20px;background:#d6e2f2"></div>
<div class="a" style="left:1030px;top:138px;width:1px;height:29px;background:#fdfdfd"></div>
<div class="a" style="left:1030px;top:167px;width:1px;height:135px;background:#7c8290"></div>
<div class="a" style="left:1030px;top:308px;width:1px;height:23px;background:#c8daf0"></div>
<div class="a" style="left:1030px;top:319px;width:1px;height:3px;background:#e0b070"></div>
<div class="a" style="left:1030px;top:331px;width:1px;height:111px;background:#f6f6f6"></div>
<div class="a" style="left:1030px;top:442px;width:1px;height:358px;background:#c4c4c4"></div>
<div class="a" style="left:271px;top:812px;width:760px;height:22px;background:#f1edec;border:1px solid #fff;border-right:none"></div>
</body></html>
